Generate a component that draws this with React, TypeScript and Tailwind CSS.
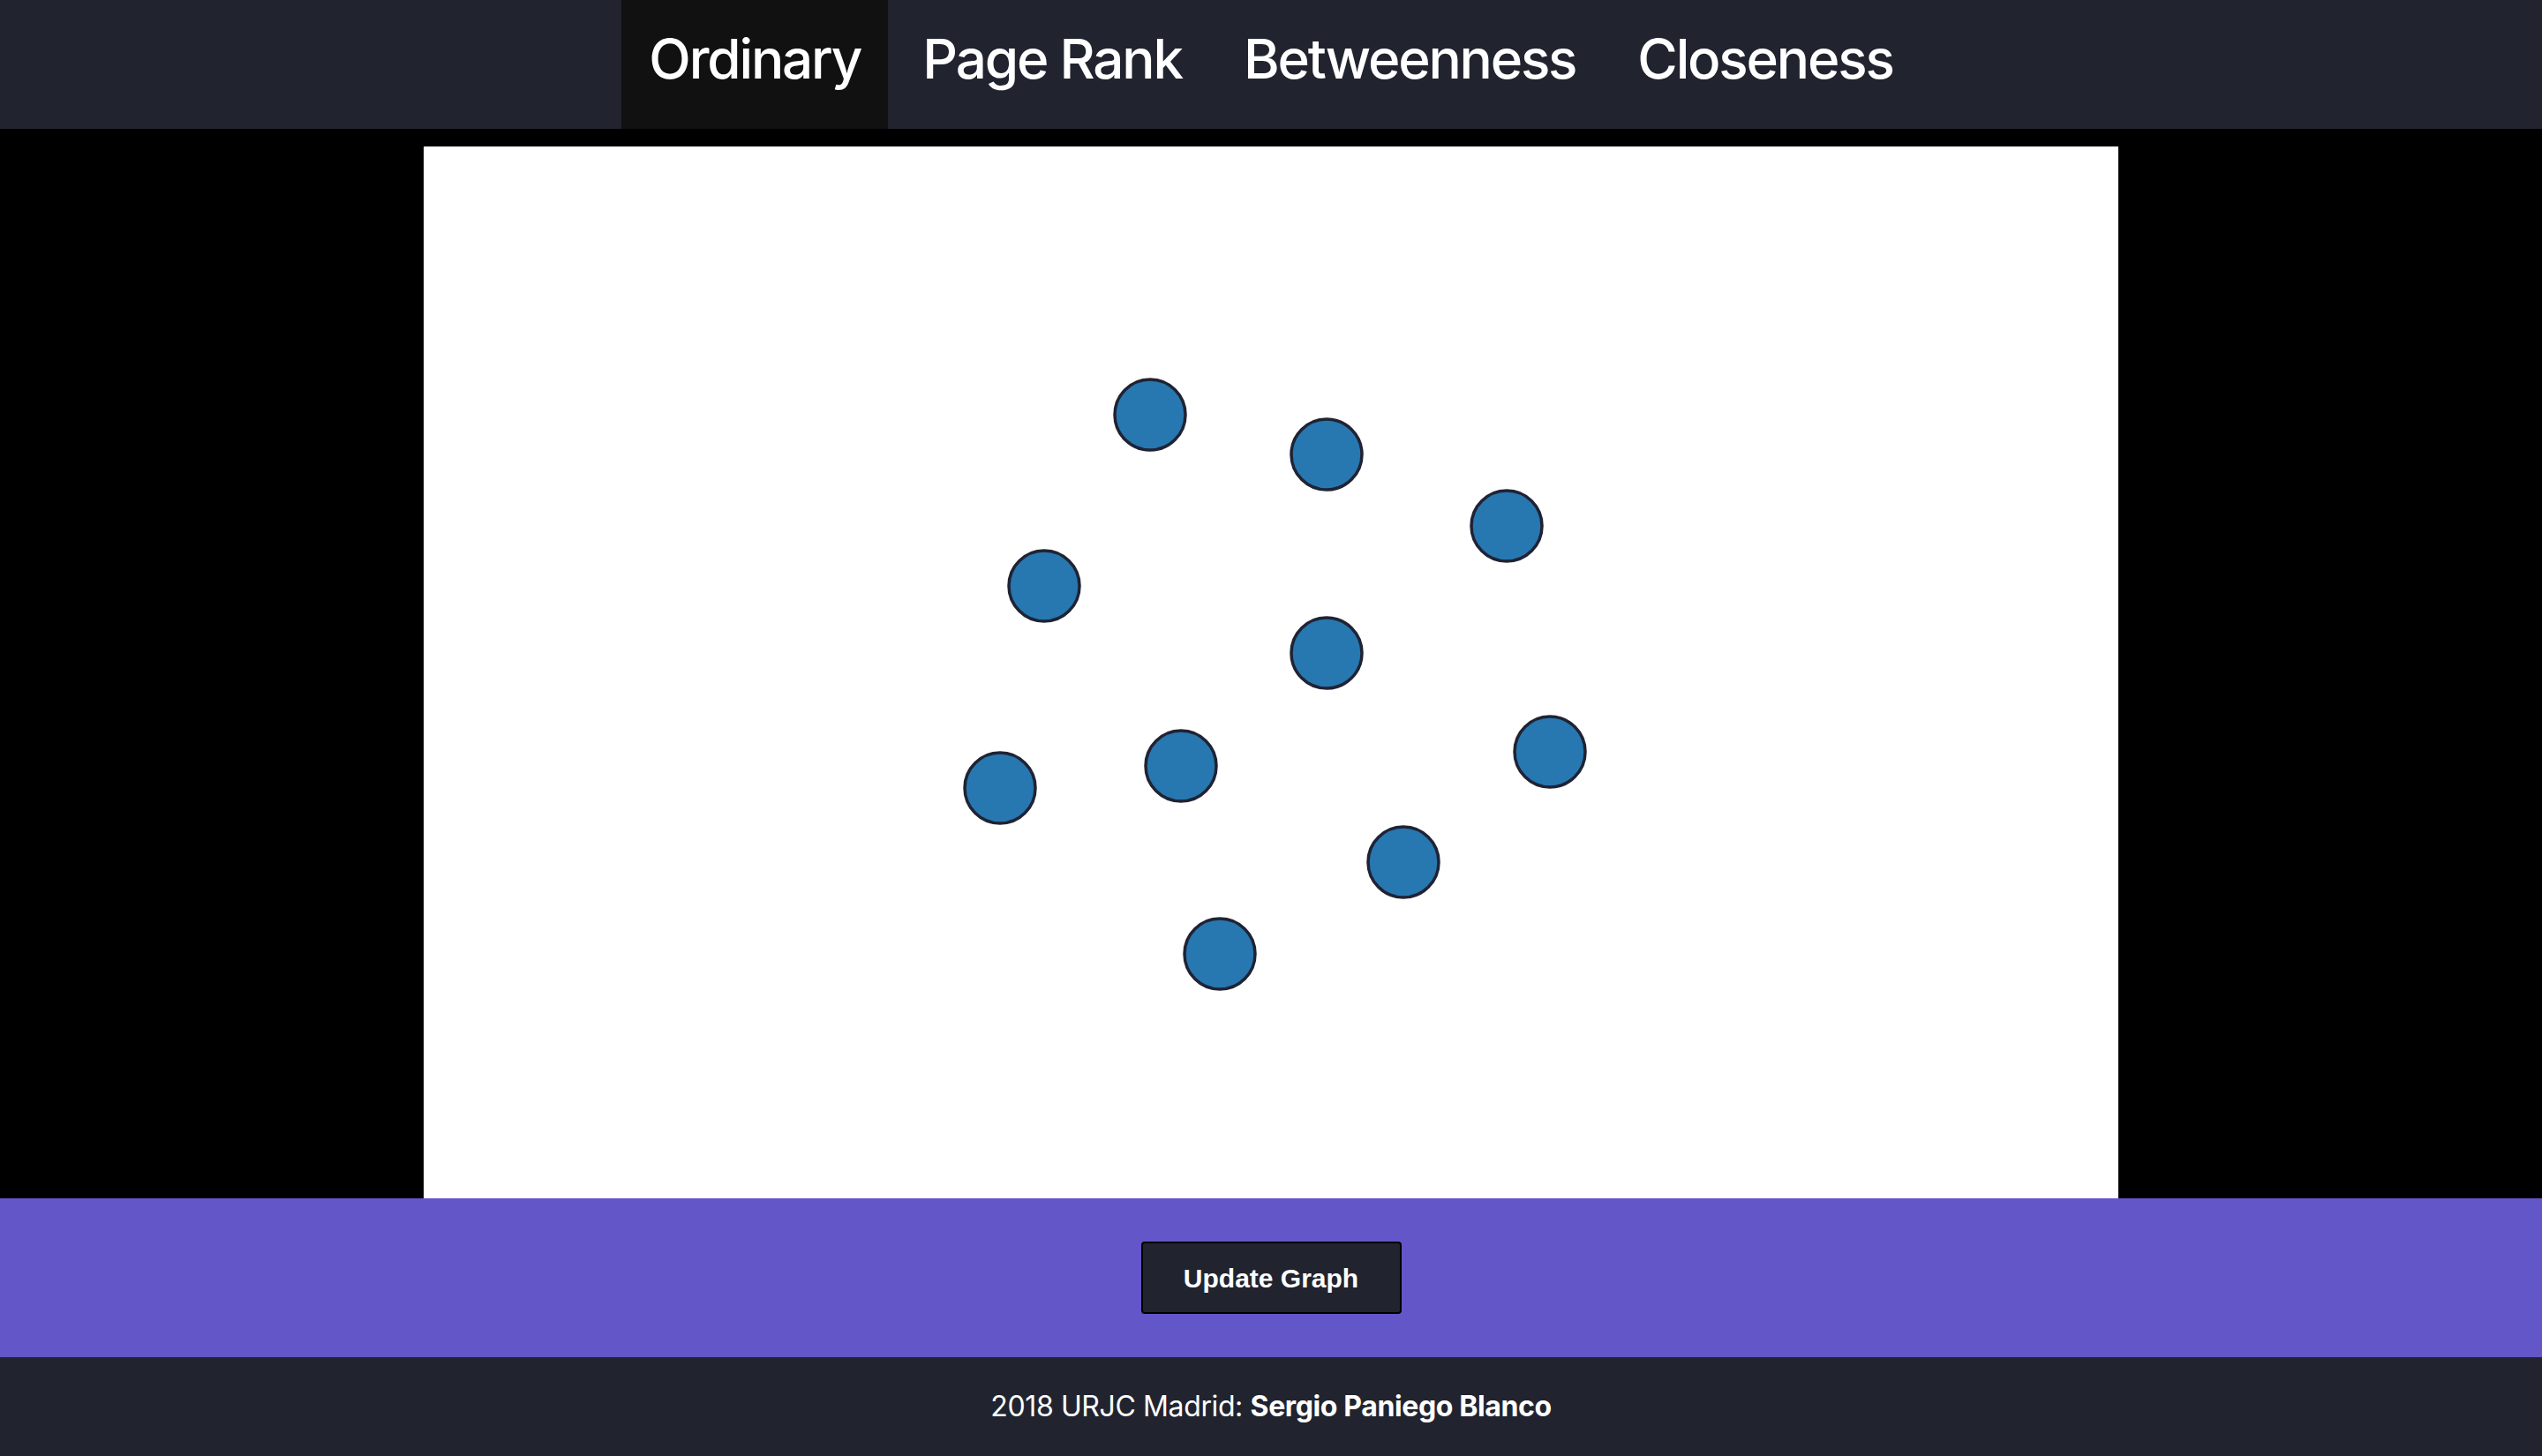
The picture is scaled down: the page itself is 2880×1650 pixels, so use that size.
const tabs = ['Ordinary', 'Page Rank', 'Betweenness', 'Closeness'];

// node positions inside the 1920x1192 canvas
const nodes: [number, number][] = [
  [823, 304],
  [1023, 349],
  [1227, 430],
  [703, 498],
  [1023, 574],
  [653, 727],
  [858, 702],
  [1276, 686],
  [1110, 811],
  [902, 915],
];

export default function App() {
  return (
    <div className="flex flex-col w-full h-[1650px] overflow-hidden bg-black font-['Inter',sans-serif]">
      <nav className="flex shrink-0 justify-center gap-[8px] h-[146px] bg-[#21242f]">
        {tabs.map((tab, i) => (
          <a
            key={tab}
            className={
              i === 0
                ? 'flex items-center px-[31px] pb-[14px] text-white text-[62px] font-medium tracking-[-0.035em] bg-[#111111]'
                : 'flex items-center px-[31px] pb-[14px] text-white text-[62px] font-medium tracking-[-0.035em]'
            }
          >
            {tab}
          </a>
        ))}
      </nav>

      <main className="flex shrink-0 justify-center pt-[20px] bg-black">
        <div className="w-[1920px] h-[1192px] bg-white">
          <svg className="block" width="1920" height="1192" viewBox="0 0 1920 1192">
            {nodes.map(([x, y], i) => (
              <circle
                key={i}
                cx={x}
                cy={y}
                r={40}
                fill="#2777b1"
                stroke="#1f2333"
                strokeWidth={3.5}
              />
            ))}
          </svg>
        </div>
      </main>

      <div className="flex shrink-0 items-center justify-center h-[180px] bg-[#6356c8]">
        <button className="w-[295px] h-[82px] bg-[#21242f] border-2 border-black rounded-[4px] text-white text-[30px] font-bold font-['Liberation_Sans',sans-serif]">
          Update Graph
        </button>
      </div>

      <footer className="flex shrink-0 items-center justify-center h-[112px] bg-[#21242f] text-white text-[32px] tracking-[-0.012em]">
        <span>
          2018 URJC Madrid: <b className="font-bold">Sergio Paniego Blanco</b>
        </span>
      </footer>
    </div>
  );
}
